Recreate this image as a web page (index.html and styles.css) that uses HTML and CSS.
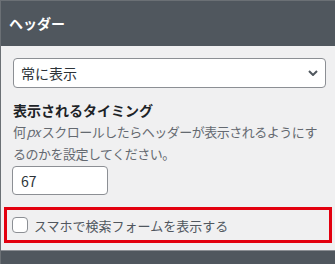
FILE: index.html
```html
<!DOCTYPE html>
<html lang="ja">

<head>
    <meta charset="UTF-8">
    <meta name="viewport" content="width=device-width, initial-scale=1.0">
    <title>ヘッダー</title>
    <link rel="stylesheet" href="styles.css">
</head>

<body>
    <div class="panel">
        <h2 class="panel-title">ヘッダー</h2>
        <div class="panel-body">
            <div class="select-wrap">
                <select class="select">
                    <option>常に表示</option>
                </select>
                <svg class="chevron" width="10" height="6" viewBox="0 0 10 6">
                    <path d="M1 1 L5 5 L9 1" fill="none" stroke="#50575e" stroke-width="2" />
                </svg>
            </div>

            <h3 class="label">表示されるタイミング</h3>
            <p class="desc">何<i>px</i>スクロールしたらヘッダーが表示されるようにするのかを設定してください。</p>
            <input class="number" type="text" value="67">

            <!-- highlighted option -->
            <label class="check-row">
                <span class="checkbox"></span>
                <span class="check-text">スマホで検索フォームを表示する</span>
            </label>
        </div>
        <div class="panel-foot"></div>
    </div>
</body>

</html>
```

FILE: styles.css
```css
body {
    margin: 0;
    background-color: #f0f0f1;
    font-family: "Noto Sans CJK JP", "Liberation Sans", sans-serif;
    color: #1d2327;
}

.panel {
    width: 335px;
    height: 264px;
    box-sizing: border-box;
    border-top: 1px solid #6b7075;
    border-left: 1px solid #6b7075;
    background-color: #f0f0f1;
    display: flex;
    flex-direction: column;
}

.panel-title {
    margin: 0;
    height: 45px;
    background-color: #50575e;
    color: #ffffff;
    font-size: 14px;
    font-weight: bold;
    line-height: 45px;
    padding-left: 8px;
}

.panel-body {
    flex: 1;
    padding: 12px 9px 0 12px;
}

.select-wrap {
    position: relative;
}

.select {
    appearance: none;
    -webkit-appearance: none;
    width: 100%;
    height: 30px;
    margin: 0;
    box-sizing: border-box;
    border: 1px solid #8c8f94;
    border-radius: 4px;
    background-color: #ffffff;
    padding: 0 24px 0 7px;
    font-family: inherit;
    font-size: 14px;
    color: #2c3338;
}

.chevron {
    position: absolute;
    right: 8px;
    top: 12px;
}

.label {
    margin: 12px 0 0;
    font-size: 14px;
    font-weight: bold;
    line-height: 20px;
    color: #1d2327;
}

.desc {
    margin: 1px 0 0;
    font-size: 13px;
    line-height: 22px;
    letter-spacing: -0.5px;
    color: #646970;
}

.desc i {
    margin: 0 2px 0 1px;
}

.number {
    display: block;
    width: 96px;
    height: 29px;
    margin: 1px 0 0 -1px;
    box-sizing: border-box;
    border: 1px solid #8c8f94;
    border-radius: 4px;
    background-color: #ffffff;
    padding: 0 8px;
    font-family: inherit;
    font-size: 14px;
    color: #2c3338;
}

.check-row {
    display: flex;
    align-items: center;
    gap: 6px;
    height: 30px;
    margin: 12px -6px 0 -9px;
    padding-left: 5px;
    border: 3px solid #e3000f;
}

.checkbox {
    width: 16px;
    height: 16px;
    box-sizing: border-box;
    border: 1px solid #8c8f94;
    border-radius: 4px;
    background-color: #ffffff;
}

.check-text {
    font-size: 13px;
    color: #50575e;
}

.panel-foot {
    height: 13px;
    border-top: 1px solid #8c8f94;
    background-color: #50575e;
}
```
